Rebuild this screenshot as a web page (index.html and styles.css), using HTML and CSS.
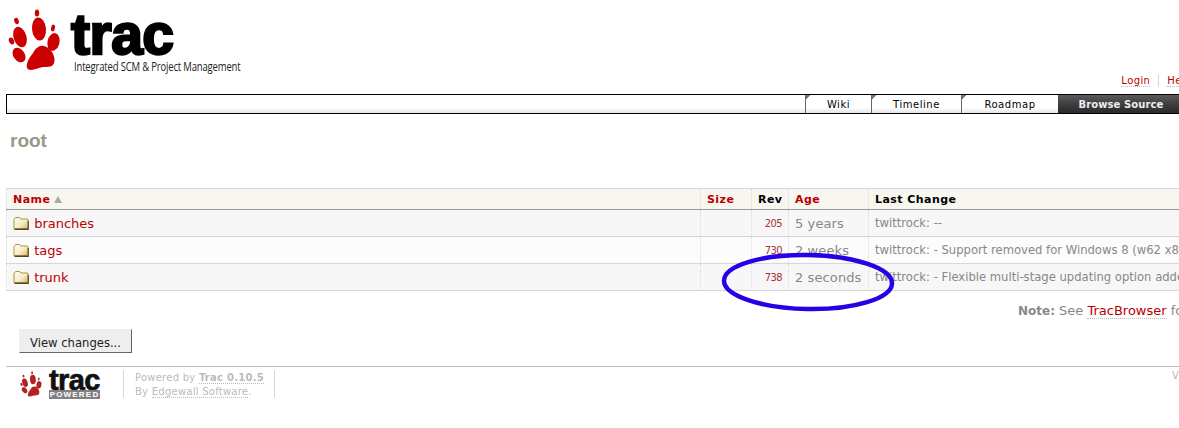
FILE: index.html
```html
<!DOCTYPE html>
<html lang="en">
  <head>
    <meta charset="UTF-8" />
    <title>root - Trac</title>
    <link rel="stylesheet" href="styles.css">
  </head>
  <body>
    <svg class="defs" width="0" height="0">
      <defs>
        <linearGradient id="folderFill" x1="0" y1="0" x2="1" y2="1">
          <stop offset="0" stop-color="#fffdf0" />
          <stop offset="0.55" stop-color="#f5ecc8" />
          <stop offset="1" stop-color="#d4b868" />
        </linearGradient>
      </defs>
    </svg>
    <div class="page">
      <div class="banner">
        <a class="logo" href="#">
          <svg class="paw" viewBox="0 0 60 62" width="60" height="62">
            <ellipse cx="3.5" cy="32" rx="2.5" ry="3.6" transform="rotate(-25 3.5 32)" />
            <ellipse cx="8.5" cy="12" rx="2.2" ry="3.2" transform="rotate(-20 8.5 12)" />
            <ellipse cx="29" cy="4" rx="2.2" ry="3.6" />
            <ellipse cx="45" cy="19" rx="2" ry="3.4" transform="rotate(10 45 19)" />
            <ellipse cx="12" cy="28" rx="6.4" ry="10.5" transform="rotate(-18 12 28)" />
            <ellipse cx="31" cy="20" rx="7" ry="11.5" transform="rotate(-5 31 20)" />
            <ellipse cx="45.5" cy="33" rx="6" ry="9" transform="rotate(12 45.5 33)" />
            <ellipse cx="11" cy="46" rx="5.6" ry="8" transform="rotate(-35 11 46)" />
            <path d="M36 37c-5-1-8 2-11 7-4 5-7 10-6 15 1 3 7 2 12 0 5-2 11 0 14-3 3-4 1-10-1-13-2-3-4-5-8-6z" />
          </svg>
          <span class="logo-text">
            <span class="logo-word">trac</span>
            <span class="logo-sub">Integrated SCM &amp; Project Management</span>
          </span>
        </a>
      </div>

      <ul class="metanav">
        <li><a href="#">Login</a></li>
        <li><a href="#">Help/Guide</a></li>
        <li><a href="#">About Trac</a></li>
      </ul>

      <ul class="mainnav">
        <li><a href="#">Wiki</a></li>
        <li><a href="#">Timeline</a></li>
        <li><a href="#">Roadmap</a></li>
        <li class="active"><a href="#">Browse Source</a></li>
      </ul>

      <h1>root</h1>

      <div class="listing-wrap">
        <table class="listing">
          <thead>
            <tr>
              <th class="col-name"><a href="#">Name</a><span class="sort-arrow"></span></th>
              <th class="col-size"><a href="#">Size</a></th>
              <th class="col-rev">Rev</th>
              <th class="col-age"><a href="#">Age</a></th>
              <th class="col-change">Last Change</th>
            </tr>
          </thead>
          <tbody>
            <tr class="odd">
              <td class="col-name">
                <svg class="folder" viewBox="0 0 16 14" width="16" height="14">
                  <path class="folder-back" d="M1 3.5 2.5 1.5h4L8 3h6.5l.5 1v8.5l-.5.5h-13L1 12.5z" />
                  <path class="folder-shade" d="M1.5 12.6h13.2V5h1.1v9H1.5z" />
                </svg>
                <a class="entry" href="#">branches</a>
              </td>
              <td></td>
              <td class="rev"><a href="#">205</a></td>
              <td class="age">5 years</td>
              <td class="change">twittrock: --</td>
            </tr>
            <tr class="even">
              <td class="col-name">
                <svg class="folder" viewBox="0 0 16 14" width="16" height="14">
                  <path class="folder-back" d="M1 3.5 2.5 1.5h4L8 3h6.5l.5 1v8.5l-.5.5h-13L1 12.5z" />
                  <path class="folder-shade" d="M1.5 12.6h13.2V5h1.1v9H1.5z" />
                </svg>
                <a class="entry" href="#">tags</a>
              </td>
              <td></td>
              <td class="rev"><a href="#">730</a></td>
              <td class="age">2 weeks</td>
              <td class="change">twittrock: - Support removed for Windows 8 (w62 x86 and x64 builds)</td>
            </tr>
            <tr class="odd">
              <td class="col-name">
                <svg class="folder" viewBox="0 0 16 14" width="16" height="14">
                  <path class="folder-back" d="M1 3.5 2.5 1.5h4L8 3h6.5l.5 1v8.5l-.5.5h-13L1 12.5z" />
                  <path class="folder-shade" d="M1.5 12.6h13.2V5h1.1v9H1.5z" />
                </svg>
                <a class="entry" href="#">trunk</a>
              </td>
              <td></td>
              <td class="rev"><a href="#">738</a></td>
              <td class="age">2 seconds</td>
              <td class="change">twittrock: - Flexible multi-stage updating option added to the manager</td>
            </tr>
          </tbody>
        </table>
        <svg class="scribble" viewBox="0 0 176 62" width="176" height="62">
          <ellipse cx="88" cy="31" rx="84" ry="27" transform="rotate(1 88 31)" />
        </svg>
      </div>

      <p class="help"><strong>Note:</strong> See <a href="#">TracBrowser</a> for help on using the browser.</p>

      <div class="buttons">
        <button type="button">View changes...</button>
      </div>

      <div class="footer">
        <a class="footer-logo" href="#">
          <svg class="paw-small" viewBox="0 0 60 62" width="25" height="28">
            <ellipse cx="3.5" cy="32" rx="2.5" ry="3.6" transform="rotate(-25 3.5 32)" />
            <ellipse cx="8.5" cy="12" rx="2.2" ry="3.2" transform="rotate(-20 8.5 12)" />
            <ellipse cx="29" cy="4" rx="2.2" ry="3.6" />
            <ellipse cx="45" cy="19" rx="2" ry="3.4" transform="rotate(10 45 19)" />
            <ellipse cx="12" cy="28" rx="6.4" ry="10.5" transform="rotate(-18 12 28)" />
            <ellipse cx="31" cy="20" rx="7" ry="11.5" transform="rotate(-5 31 20)" />
            <ellipse cx="45.5" cy="33" rx="6" ry="9" transform="rotate(12 45.5 33)" />
            <ellipse cx="11" cy="46" rx="5.6" ry="8" transform="rotate(-35 11 46)" />
            <path d="M36 37c-5-1-8 2-11 7-4 5-7 10-6 15 1 3 7 2 12 0 5-2 11 0 14-3 3-4 1-10-1-13-2-3-4-5-8-6z" />
          </svg>
          <span class="footer-mark">
            <span class="footer-word">trac</span>
            <span class="footer-powered">POWERED</span>
          </span>
        </a>
        <p class="footer-left">
          Powered by <a href="#"><strong>Trac 0.10.5</strong></a><br />
          By <a href="#">Edgewall Software</a>.
        </p>
        <p class="footer-right">Visit the Trac open source project at</p>
      </div>
    </div>
  </body>
</html>
```

FILE: styles.css
```css
html,
body {
  margin: 0;
  overflow: hidden;
  background-color: white;
}
body {
  font-family: "DejaVu Sans", Verdana, sans-serif;
  font-size: 13px;
  color: #000;
}
a {
  color: #b00;
  text-decoration: none;
}
.defs {
  display: block;
}
.page {
  width: 1380px;
  padding: 0 6px;
  box-sizing: border-box;
}

/* banner */
.banner {
  height: 74px;
}
.logo {
  display: flex;
  align-items: flex-start;
  padding: 9px 0 0 2px;
  color: #000;
}
.paw {
  fill: #c00;
  flex: none;
}
.logo-text {
  display: flex;
  flex-direction: column;
  margin-left: 3px;
  width: 170px;
}
.logo-word {
  font-family: "Liberation Sans", sans-serif;
  font-weight: bold;
  font-size: 57px;
  line-height: 44px;
  height: 48px;
  margin-top: 3px;
  letter-spacing: -0.5px;
  -webkit-text-stroke: 2.4px #000;
}
.logo-sub {
  font-family: "Open Sans", sans-serif;
  font-size: 12px;
  line-height: 14px;
  margin-left: 3px;
  white-space: nowrap;
  letter-spacing: -0.2px;
  color: #222;
  transform: scaleX(0.79);
  transform-origin: left center;
}

/* nav */
.metanav {
  display: flex;
  justify-content: flex-end;
  list-style: none;
  margin: 0;
  padding: 0;
  height: 20px;
  box-sizing: border-box;
  font-size: 10px;
  letter-spacing: 0.4px;
  width: 1303px;
}
.metanav li {
  padding: 0 8px;
  height: 13px;
  line-height: 13px;
  border-left: 1px solid #d7d7d7;
}
.metanav li:first-child {
  border-left: none;
}
.metanav a {
  border-bottom: 1px dotted #bbb;
}
.mainnav {
  display: flex;
  justify-content: flex-end;
  list-style: none;
  margin: 0;
  padding: 0 189px 0 0;
  height: 20px;
  box-sizing: border-box;
  border: 1px solid #000;
  background: linear-gradient(#fff 70%, #e4e4e4);
  font-size: 10px;
  letter-spacing: 0.55px;
}
.mainnav li {
  border-left: 1px solid #666;
  background: linear-gradient(135deg, #777 0, #777 3px, transparent 3px);
}
.mainnav a {
  display: block;
  line-height: 19px;
  color: #000;
}
.mainnav li:nth-child(1) a {
  width: 65px;
  text-align: center;
}
.mainnav li:nth-child(2) a {
  width: 89px;
  text-align: center;
}
.mainnav li:nth-child(3) a {
  width: 96px;
  text-align: center;
}
.mainnav .active {
  border-left: none;
  background: linear-gradient(#5a5a5a, #3a3a3a 60%, #2a2a2a);
}
.mainnav .active a {
  width: 126px;
  text-align: center;
  color: #eee;
  font-weight: bold;
  letter-spacing: 0.1px;
}

h1 {
  margin: 16px 0 0 4px;
  font-family: "Liberation Sans", sans-serif;
  font-size: 19px;
  line-height: 22px;
  font-weight: bold;
  color: #999986;
}

/* file listing */
.listing-wrap {
  position: relative;
  margin-top: 36px;
}
.listing {
  width: 100%;
  table-layout: fixed;
  border-collapse: collapse;
  border-top: 1px solid #d7d7d7;
  border-bottom: 1px solid #d7d7d7;
}
.listing th {
  height: 20px;
  padding: 0 6px;
  text-align: left;
  font-size: 11px;
  font-weight: bold;
  letter-spacing: 0.45px;
  background-color: #f7f7f0;
  border-bottom: 1px solid #999;
  border-left: 1px dotted #d7d7d7;
}
.listing td {
  height: 26px;
  padding: 0 6px;
  border-left: 1px dotted #d7d7d7;
  border-top: 1px solid #d7d7d7;
  white-space: nowrap;
  overflow: hidden;
}
.col-name {
  width: 681px;
}
.col-size {
  width: 38px;
}
.col-rev {
  width: 24px;
}
.col-age {
  width: 67px;
}
.sort-arrow {
  display: inline-block;
  margin-left: 4px;
  border-left: 4px solid transparent;
  border-right: 4px solid transparent;
  border-bottom: 7px solid #aaa;
}
.odd td {
  background-color: #f7f7f7;
}
.even td {
  background-color: #fcfcfc;
}
.folder {
  vertical-align: -2px;
  margin-right: 1px;
}
.folder-back {
  fill: url(#folderFill);
  stroke: #b08f3e;
  stroke-width: 1;
}
.folder-shade {
  fill: #54451f;
}
.entry {
  font-size: 13px;
}
.rev {
  text-align: right;
  font-size: 10px;
  letter-spacing: -0.6px;
}
.rev a {
  color: #a33;
}
.age {
  font-size: 13px;
  letter-spacing: 0.1px;
  color: #888;
}
.change {
  font-size: 11.6px;
  color: #888;
}
.scribble {
  position: absolute;
  left: 714px;
  top: 63px;
}
.scribble ellipse {
  fill: none;
  stroke: #2800e6;
  stroke-width: 4.5;
}

.help {
  margin: 12px 0 0;
  text-align: right;
  font-size: 13px;
  line-height: 16px;
  color: #888;
  padding-right: 9px;
}
.help strong {
  font-size: 12px;
}
.help a {
  border-bottom: 1px dotted #bbb;
}

.buttons {
  padding: 10px 0 0 13px;
}
button {
  width: 113px;
  height: 24px;
  padding: 4px 0 0;
  font-family: "DejaVu Sans", Verdana, sans-serif;
  font-size: 11.6px;
  color: #222;
  background-color: #eee;
  border: 1px solid #eee;
  border-right-color: #666;
  border-bottom-color: #666;
}

/* footer */
.footer {
  display: flex;
  align-items: flex-start;
  margin-top: 13px;
  padding-top: 3px;
  border-top: 1px solid #bbb;
  font-size: 10px;
  letter-spacing: 0.25px;
  color: #bbb;
}
.footer-logo {
  display: flex;
  width: 100px;
  padding-left: 14px;
  box-sizing: border-box;
}
.paw-small {
  fill: #b22222;
  flex: none;
}
.footer-mark {
  display: flex;
  flex-direction: column;
  margin-left: 4px;
  width: 51px;
}
.footer-word {
  font-family: "Liberation Sans", sans-serif;
  font-weight: bold;
  font-size: 29px;
  line-height: 21px;
  height: 20px;
  letter-spacing: -0.6px;
  color: #111;
  -webkit-text-stroke: 0.7px #111;
}
.footer-powered {
  background-color: #808080;
  color: #fff;
  font-family: "Liberation Sans", sans-serif;
  font-size: 8px;
  font-weight: bold;
  line-height: 9px;
  letter-spacing: 1.2px;
  text-align: center;
}
.footer-left {
  margin: 0 0 0 17px;
  padding: 1px 10px 0 11px;
  width: 129px;
  height: 27px;
  line-height: 14px;
  white-space: nowrap;
  border-left: 1px solid #d7d7d7;
  border-right: 1px solid #d7d7d7;
}
.footer-left a {
  color: #bbb;
  border-bottom: 1px dotted #bbb;
}
.footer-right {
  margin: 0 0 0 auto;
  white-space: nowrap;
  width: 202px;
}
```
